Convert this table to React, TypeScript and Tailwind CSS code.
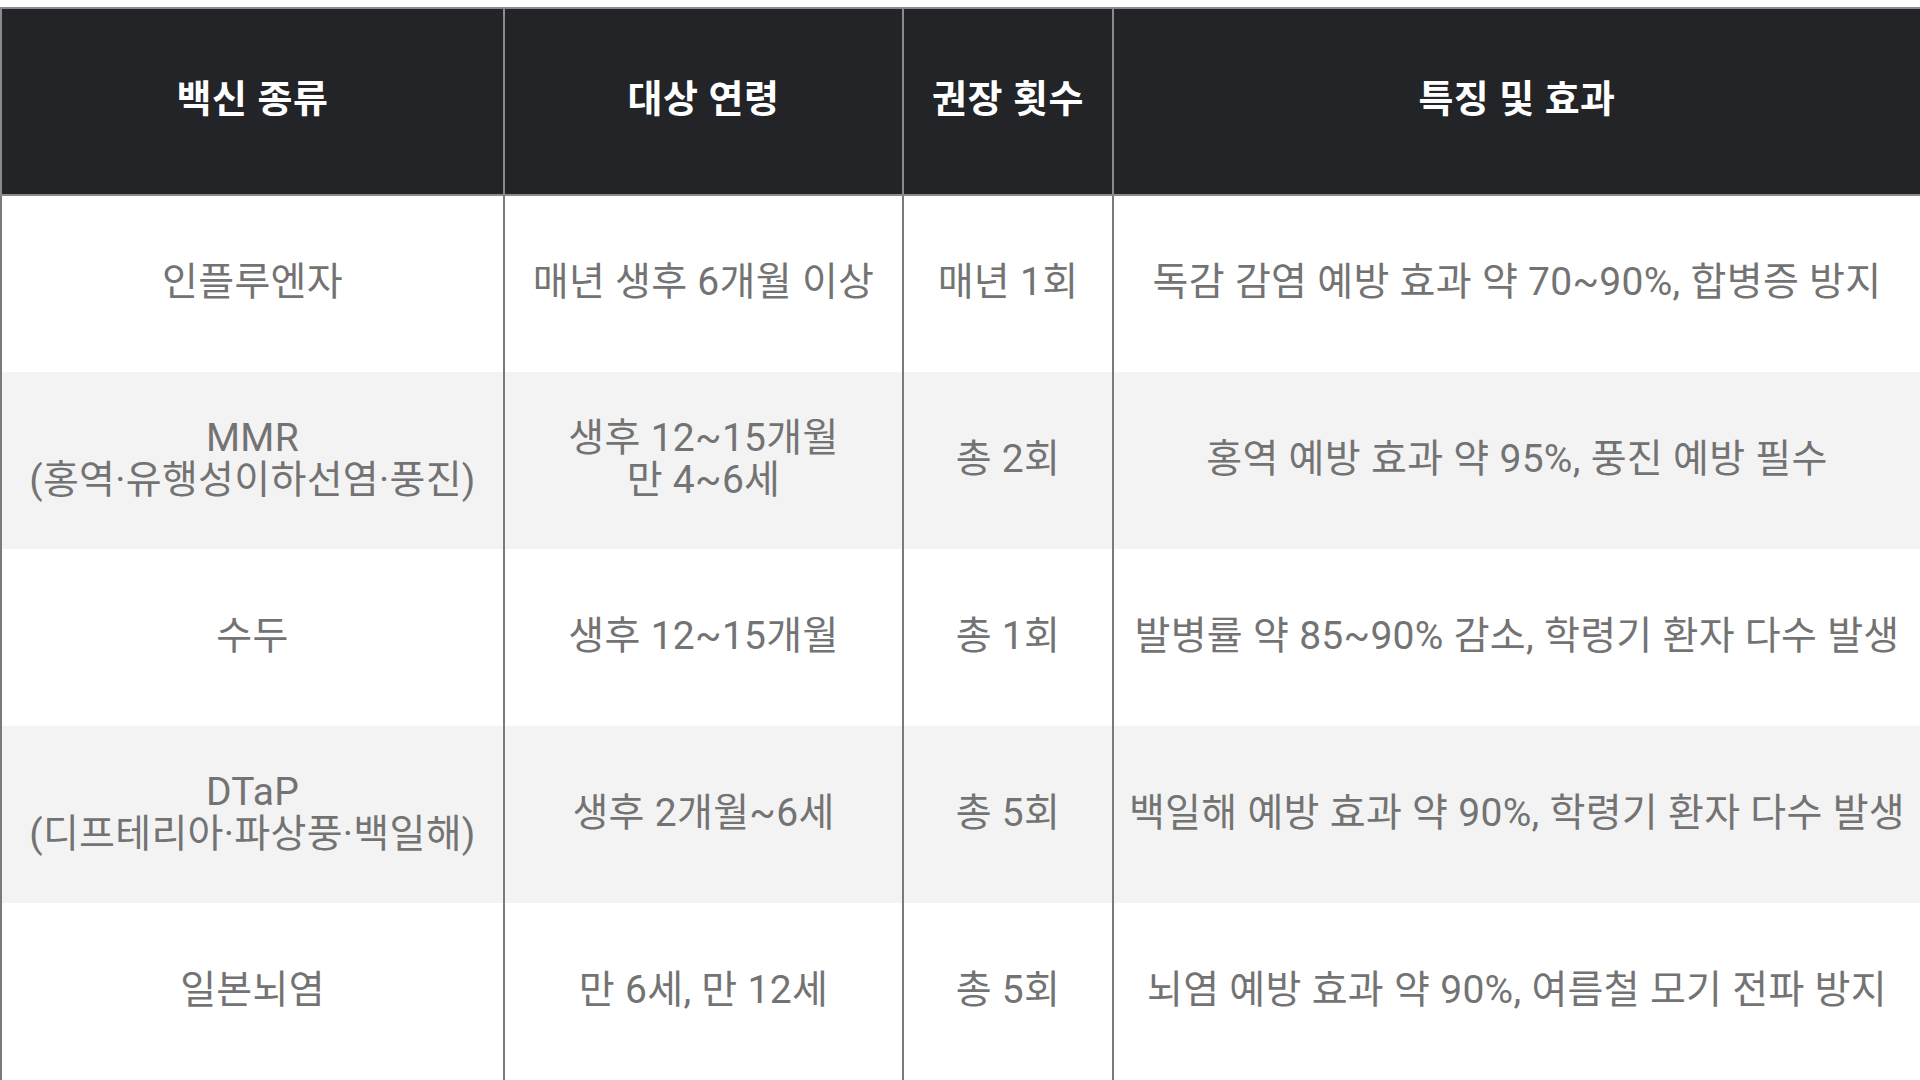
import React from "react";

interface Row {
  vaccine: React.ReactNode;
  age: React.ReactNode;
  doses: string;
  effect: string;
}

const rows: Row[] = [
  { vaccine: "인플루엔자", age: "매년 생후 6개월 이상", doses: "매년 1회", effect: "독감 감염 예방 효과 약 70~90%, 합병증 방지" },
  {
    vaccine: (
      <>
        MMR
        <br />
        (홍역·유행성이하선염·풍진)
      </>
    ),
    age: (
      <>
        생후 12~15개월
        <br />
        만 4~6세
      </>
    ),
    doses: "총 2회",
    effect: "홍역 예방 효과 약 95%, 풍진 예방 필수",
  },
  { vaccine: "수두", age: "생후 12~15개월", doses: "총 1회", effect: "발병률 약 85~90% 감소, 학령기 환자 다수 발생" },
  {
    vaccine: (
      <>
        DTaP
        <br />
        (디프테리아·파상풍·백일해)
      </>
    ),
    age: "생후 2개월~6세",
    doses: "총 5회",
    effect: "백일해 예방 효과 약 90%, 학령기 환자 다수 발생",
  },
  { vaccine: "일본뇌염", age: "만 6세, 만 12세", doses: "총 5회", effect: "뇌염 예방 효과 약 90%, 여름철 모기 전파 방지" },
];

const headers = ["백신 종류", "대상 연령", "권장 횟수", "특징 및 효과"];
const widths = ["w-[503px]", "w-[399px]", "w-[210px]", "w-[808px]"];

export default function App() {
  return (
    <div
      className="w-[1920px] h-[1080px] overflow-hidden bg-white pt-[7px]"
      style={{ fontFamily: 'Roboto, "Noto Sans CJK KR", "Noto Sans", sans-serif' }}
    >
      <table className="w-[1920px] table-fixed border-collapse">
        <colgroup>
          {widths.map((w, i) => (
            <col key={i} className={w} />
          ))}
        </colgroup>
        <thead>
          <tr className="h-[187px] bg-[#232428]">
            {headers.map((h, i) => (
              <th
                key={i}
                className="border-2 border-[#8a8a8a] pb-1 text-center text-[38px] font-bold text-white tracking-[0.5px]"
              >
                {h}
              </th>
            ))}
          </tr>
        </thead>
        <tbody>
          {rows.map((r, i) => (
            <tr key={i} className={`h-[177px] ${i % 2 === 1 ? "bg-[#f3f3f3]" : "bg-white"}`}>
              {[r.vaccine, r.age, r.doses, r.effect].map((c, j) => (
                <td
                  key={j}
                  className="border-x-2 border-[#7a7a7a] px-0 pb-1 text-center text-[39px] leading-[42px] tracking-[0.3px] text-[#737373] whitespace-nowrap"
                >
                  {c}
                </td>
              ))}
            </tr>
          ))}
        </tbody>
      </table>
    </div>
  );
}
